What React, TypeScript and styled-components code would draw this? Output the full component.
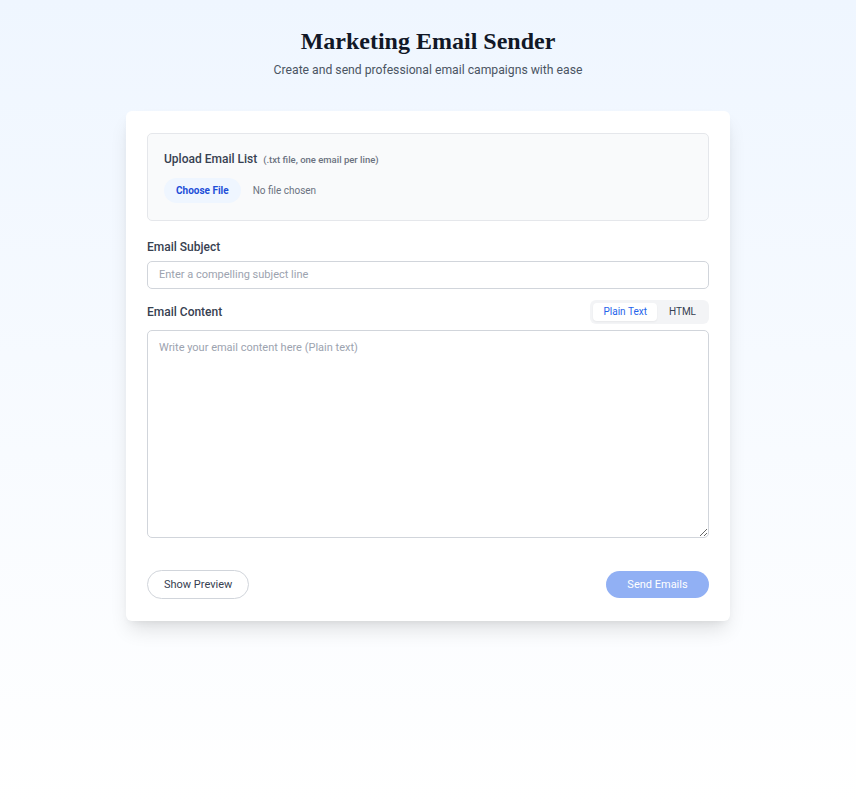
import React, { useState } from "react";
import styled, { createGlobalStyle } from "styled-components";

const GlobalStyle = createGlobalStyle`
  html, body { margin: 0; padding: 0; }
  body {
    font-family: Roboto, "Noto Sans", sans-serif;
    background: #fff;
  }
  * { box-sizing: border-box; }
`;

const Page = styled.div`
  min-height: 807px;
  background: linear-gradient(to bottom, #eff6ff 0%, #ffffff 100%);
  padding: 27px 0 40px;
  display: flex;
  flex-direction: column;
  align-items: center;
`;

const Header = styled.header`
  text-align: center;
  margin-bottom: 32px;
`;

const Title = styled.h1`
  font-family: "Liberation Serif", "Times New Roman", serif;
  font-size: 24px;
  font-weight: 700;
  color: #111827;
  margin: 0 0 6px;
  line-height: 1.2;
`;

const Subtitle = styled.p`
  margin: 0;
  font-size: 12.2px;
  line-height: 1.4;
  color: #4b5563;
`;

const Card = styled.main`
  width: 604px;
  background: #fff;
  border-radius: 6px;
  box-shadow: 0 12px 20px -4px rgba(0, 0, 0, 0.12), 0 4px 8px -4px rgba(0, 0, 0, 0.08);
  padding: 22px 21px 22px;
  display: flex;
  flex-direction: column;
`;

const UploadBox = styled.section`
  background: #f9fafb;
  border: 1px solid #e5e7eb;
  border-radius: 5px;
  padding: 18px 16px 17px;
  margin-bottom: 19px;
`;

const UploadLabel = styled.div`
  display: flex;
  align-items: baseline;
  gap: 6px;
  margin-bottom: 12px;
`;

const Label = styled.label`
  font-size: 12px;
  font-weight: 500;
  color: #374151;
`;

const Hint = styled.span`
  font-size: 9.5px;
  font-weight: 500;
  color: #6b7280;
`;

const FileInput = styled.input`
  font-family: Roboto, "Noto Sans", sans-serif;
  font-size: 10px;
  color: #6b7280;
  &::file-selector-button {
    font-family: Roboto, "Noto Sans", sans-serif;
    font-size: 10px;
    font-weight: 700;
    color: #1d4ed8;
    background: #eff6ff;
    border: none;
    border-radius: 999px;
    padding: 7px 12px;
    margin-right: 12px;
    cursor: pointer;
  }
`;

const Field = styled.div`
  display: flex;
  flex-direction: column;
  margin-bottom: 11px;
`;

const FieldHead = styled.div`
  display: flex;
  justify-content: space-between;
  align-items: center;
  margin-bottom: 6px;
`;

const SubjectLabel = styled(Label)`
  margin-bottom: 7px;
`;

const TextInput = styled.input`
  height: 28px;
  border: 1px solid #d1d5db;
  border-radius: 5px;
  padding: 0 11px;
  font-family: Roboto, "Noto Sans", sans-serif;
  font-size: 11px;
  color: #111827;
  outline: none;
  &::placeholder { color: #9ca3af; }
`;

const Toggle = styled.div`
  display: flex;
  background: #f3f4f6;
  border-radius: 6px;
  padding: 3px;
  gap: 2px;
`;

const ToggleBtn = styled.button<{ $active?: boolean }>`
  border: none;
  border-radius: 4px;
  background: ${(p) => (p.$active ? "#fff" : "transparent")};
  box-shadow: ${(p) => (p.$active ? "0 1px 2px rgba(0,0,0,0.05)" : "none")};
  color: ${(p) => (p.$active ? "#2563eb" : "#374151")};
  font-family: Roboto, "Noto Sans", sans-serif;
  font-size: 10px;
  padding: 0 10px;
  height: 18px;
  cursor: pointer;
`;

const TextArea = styled.textarea`
  height: 208px;
  border: 1px solid #d1d5db;
  border-radius: 5px;
  padding: 10px 11px;
  font-family: Roboto, "Noto Sans", sans-serif;
  font-size: 11px;
  color: #111827;
  resize: vertical;
  outline: none;
  &::placeholder { color: #9ca3af; }
`;

const Actions = styled.div`
  display: flex;
  justify-content: space-between;
  align-items: center;
  margin-top: 21px;
`;

const OutlineBtn = styled.button`
  height: 29px;
  padding: 0 16px;
  border: 1px solid #d1d5db;
  border-radius: 999px;
  background: #fff;
  color: #374151;
  font-family: Roboto, "Noto Sans", sans-serif;
  font-size: 11px;
  cursor: pointer;
`;

const PrimaryBtn = styled.button`
  height: 27px;
  width: 103px;
  border: none;
  border-radius: 999px;
  background: #2563eb;
  opacity: 0.5;
  color: #fff;
  font-family: Roboto, "Noto Sans", sans-serif;
  font-size: 11px;
  cursor: not-allowed;
`;

export default function App() {
  const [mode, setMode] = useState<"plain" | "html">("plain");
  return (
    <>
      <GlobalStyle />
      <Page>
        <Header>
          <Title>Marketing Email Sender</Title>
          <Subtitle>Create and send professional email campaigns with ease</Subtitle>
        </Header>
        <Card>
          <UploadBox>
            <UploadLabel>
              <Label>Upload Email List</Label>
              <Hint>(.txt file, one email per line)</Hint>
            </UploadLabel>
            <FileInput type="file" accept=".txt" />
          </UploadBox>
          <Field>
            <SubjectLabel>Email Subject</SubjectLabel>
            <TextInput placeholder="Enter a compelling subject line" />
          </Field>
          <Field>
            <FieldHead>
              <Label>Email Content</Label>
              <Toggle>
                <ToggleBtn $active={mode === "plain"} onClick={() => setMode("plain")}>
                  Plain Text
                </ToggleBtn>
                <ToggleBtn $active={mode === "html"} onClick={() => setMode("html")}>
                  HTML
                </ToggleBtn>
              </Toggle>
            </FieldHead>
            <TextArea
              placeholder={
                mode === "plain"
                  ? "Write your email content here (Plain text)"
                  : "Write your email content here (HTML)"
              }
            />
          </Field>
          <Actions>
            <OutlineBtn>Show Preview</OutlineBtn>
            <PrimaryBtn disabled>Send Emails</PrimaryBtn>
          </Actions>
        </Card>
      </Page>
    </>
  );
}
